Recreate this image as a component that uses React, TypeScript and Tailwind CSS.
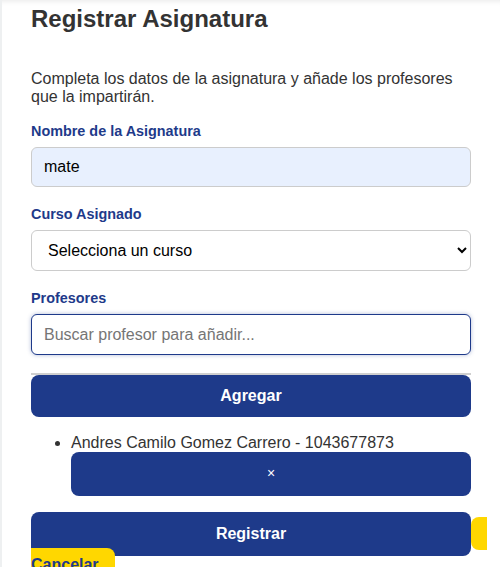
import { useState } from 'react';

const font = { fontFamily: '"Liberation Sans", Arial, sans-serif' };

export default function App() {
  const [nombre, setNombre] = useState('mate');
  const [busqueda, setBusqueda] = useState('');
  const [profesores, setProfesores] = useState([
    { id: '1043677873', nombre: 'Andres Camilo Gomez Carrero' },
  ]);

  const quitar = (id: string) => setProfesores(prev => prev.filter(p => p.id !== id));

  return (
    <div className="min-h-screen bg-[#eef0f1] pl-[2px]" style={font}>
      <div className="min-h-screen bg-white px-[29px] pt-[5px] shadow-[inset_0_6px_6px_-6px_rgba(0,0,0,0.12)]">
        {/* Header */}
        <h2 className="text-[24px] font-bold leading-[normal] text-[#333]">Registrar Asignatura</h2>
        <p className="mt-[37px] text-[16px] leading-[normal] text-[#333]">
          Completa los datos de la asignatura y añade los profesores que la impartirán.
        </p>

        <form className="mt-[17px]" onSubmit={e => e.preventDefault()}>
          <div className="mb-[19px]">
            <label className="mb-2 block text-[14.4px] font-bold leading-[16px] text-[#1e3a8a]">
              Nombre de la Asignatura
            </label>
            <input
              value={nombre}
              onChange={e => setNombre(e.target.value)}
              className="block h-[40.4px] w-full rounded-[6px] border border-[#ccc] bg-[#e8f0fe] px-3 text-[16px] text-black outline-none"
            />
          </div>

          <div className="mb-[19px]">
            <label className="mb-2 block text-[14.4px] font-bold leading-[16px] text-[#1e3a8a]">
              Curso Asignado
            </label>
            <select className="block h-[41px] w-full appearance-auto rounded-[6px] border border-[#ccc] bg-white px-3 text-[16px] text-black outline-none">
              <option>Selecciona un curso</option>
            </select>
          </div>

          <div>
            <label className="mb-2 block text-[14.4px] font-bold leading-[16px] text-[#1e3a8a]">
              Profesores
            </label>
            <input
              value={busqueda}
              onChange={e => setBusqueda(e.target.value)}
              placeholder="Buscar profesor para añadir..."
              className="block h-[40.4px] w-full rounded-[6px] border border-[#1e3a8a] bg-white px-3 text-[16px] text-black shadow-[0_0_4px_rgba(30,58,138,0.35)] outline-none placeholder:text-[#757575]"
            />
            {/* empty suggestion list */}
            <div className="mt-[18px] h-[2px] bg-[#cfcfcf]" />
            <button
              type="button"
              className="block h-[42px] w-full rounded-lg bg-[#1e3a8a] text-[16px] font-bold text-white"
            >
              Agregar
            </button>
          </div>

          <ul className="my-4 list-disc pl-10 text-[16px] leading-[19px] text-[#333]">
            {profesores.map(p => (
              <li key={p.id}>
                {p.nombre} - {p.id}
                <button
                  type="button"
                  onClick={() => quitar(p.id)}
                  className="block h-[44px] w-full rounded-lg bg-[#1e3a8a] text-[14px] text-white"
                >
                  ×
                </button>
              </li>
            ))}
          </ul>

          <div className="whitespace-nowrap text-[16px] leading-[normal]">
            <button
              type="submit"
              className="inline-block h-[44px] w-full rounded-lg bg-[#1e3a8a] text-[16px] font-bold text-white"
            >
              Registrar
            </button><a href="#" className="whitespace-normal rounded-lg bg-[#ffd700] px-4 py-2 font-bold text-[#1e3a8a]">{'\u2060\u200BCancelar'}</a>
          </div>
        </form>
      </div>
    </div>
  );
}
